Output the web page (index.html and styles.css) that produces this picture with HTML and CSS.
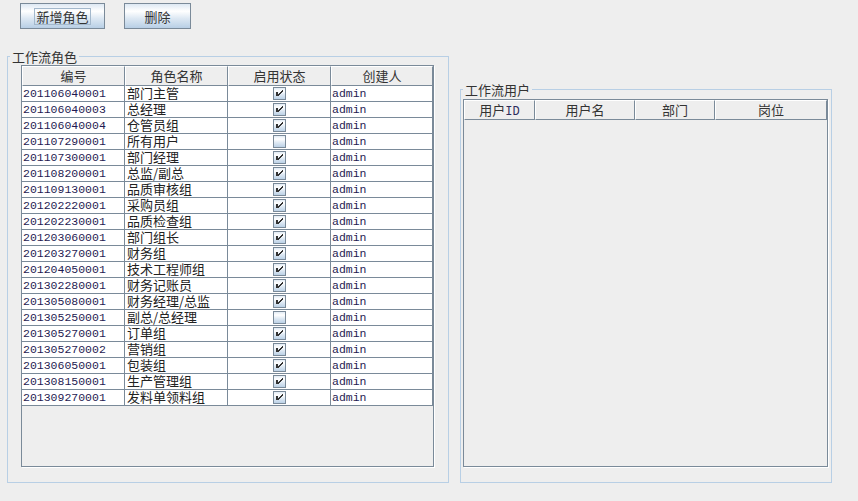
FILE: index.html
```html
<!DOCTYPE html>
<html lang="zh-CN">
<head>
<meta charset="utf-8">
<title>工作流角色</title>
<link rel="stylesheet" href="styles.css">
</head>
<body>
<svg class="defs" width="0" height="0" aria-hidden="true">
  <defs>
    <linearGradient id="cbg" x1="0" y1="0" x2="0" y2="1">
      <stop offset="0" stop-color="#dde8f3"/>
      <stop offset="0.3" stop-color="#ffffff"/>
      <stop offset="0.6" stop-color="#dde8f3"/>
      <stop offset="1" stop-color="#b8cfe5"/>
    </linearGradient>
    <symbol id="cb-off" viewBox="0 0 13 13">
      <rect x="0.5" y="0.5" width="12" height="12" fill="url(#cbg)" stroke="#7a8a99"/>
    </symbol>
    <symbol id="cb-on" viewBox="0 0 13 13">
      <rect x="0.5" y="0.5" width="12" height="12" fill="url(#cbg)" stroke="#7a8a99"/>
      <path d="M3 5h2v4h-2z M9 3h1v2h-1z M8 4h1v2h-1z M7 5h1v2h-1z M6 6h1v2h-1z M5 7h1v2h-1z" fill="#333333" shape-rendering="crispEdges"/>
    </symbol>
  </defs>
</svg>

<div class="toolbar">
  <button class="btn btn-add"><span class="focus">新增角色</span></button>
  <button class="btn btn-del">删除</button>
</div>

<div class="panels">
  <fieldset class="group group-roles">
    <legend>工作流角色</legend>
    <div class="group-body roles-body">
      <div class="scroll roles-scroll">
        <div class="grid roles-grid">
          <div class="th">编号</div>
          <div class="th">角色名称</div>
          <div class="th">启用状态</div>
          <div class="th">创建人</div>

          <div class="td mono">201106040001</div><div class="td">部门主管</div><div class="td cb-cell"><svg class="cb"><use href="#cb-on"/></svg></div><div class="td mono">admin</div>
          <div class="td mono">201106040003</div><div class="td">总经理</div><div class="td cb-cell"><svg class="cb"><use href="#cb-on"/></svg></div><div class="td mono">admin</div>
          <div class="td mono">201106040004</div><div class="td">仓管员组</div><div class="td cb-cell"><svg class="cb"><use href="#cb-on"/></svg></div><div class="td mono">admin</div>
          <div class="td mono">201107290001</div><div class="td">所有用户</div><div class="td cb-cell"><svg class="cb"><use href="#cb-off"/></svg></div><div class="td mono">admin</div>
          <div class="td mono">201107300001</div><div class="td">部门经理</div><div class="td cb-cell"><svg class="cb"><use href="#cb-on"/></svg></div><div class="td mono">admin</div>
          <div class="td mono">201108200001</div><div class="td">总监/副总</div><div class="td cb-cell"><svg class="cb"><use href="#cb-on"/></svg></div><div class="td mono">admin</div>
          <div class="td mono">201109130001</div><div class="td">品质审核组</div><div class="td cb-cell"><svg class="cb"><use href="#cb-on"/></svg></div><div class="td mono">admin</div>
          <div class="td mono">201202220001</div><div class="td">采购员组</div><div class="td cb-cell"><svg class="cb"><use href="#cb-on"/></svg></div><div class="td mono">admin</div>
          <div class="td mono">201202230001</div><div class="td">品质检查组</div><div class="td cb-cell"><svg class="cb"><use href="#cb-on"/></svg></div><div class="td mono">admin</div>
          <div class="td mono">201203060001</div><div class="td">部门组长</div><div class="td cb-cell"><svg class="cb"><use href="#cb-on"/></svg></div><div class="td mono">admin</div>
          <div class="td mono">201203270001</div><div class="td">财务组</div><div class="td cb-cell"><svg class="cb"><use href="#cb-on"/></svg></div><div class="td mono">admin</div>
          <div class="td mono">201204050001</div><div class="td">技术工程师组</div><div class="td cb-cell"><svg class="cb"><use href="#cb-on"/></svg></div><div class="td mono">admin</div>
          <div class="td mono">201302280001</div><div class="td">财务记账员</div><div class="td cb-cell"><svg class="cb"><use href="#cb-on"/></svg></div><div class="td mono">admin</div>
          <div class="td mono">201305080001</div><div class="td">财务经理/总监</div><div class="td cb-cell"><svg class="cb"><use href="#cb-on"/></svg></div><div class="td mono">admin</div>
          <div class="td mono">201305250001</div><div class="td">副总/总经理</div><div class="td cb-cell"><svg class="cb"><use href="#cb-off"/></svg></div><div class="td mono">admin</div>
          <div class="td mono">201305270001</div><div class="td">订单组</div><div class="td cb-cell"><svg class="cb"><use href="#cb-on"/></svg></div><div class="td mono">admin</div>
          <div class="td mono">201305270002</div><div class="td">营销组</div><div class="td cb-cell"><svg class="cb"><use href="#cb-on"/></svg></div><div class="td mono">admin</div>
          <div class="td mono">201306050001</div><div class="td">包装组</div><div class="td cb-cell"><svg class="cb"><use href="#cb-on"/></svg></div><div class="td mono">admin</div>
          <div class="td mono">201308150001</div><div class="td">生产管理组</div><div class="td cb-cell"><svg class="cb"><use href="#cb-on"/></svg></div><div class="td mono">admin</div>
          <div class="td mono">201309270001</div><div class="td">发料单领料组</div><div class="td cb-cell"><svg class="cb"><use href="#cb-on"/></svg></div><div class="td mono">admin</div>
        </div>
      </div>
    </div>
  </fieldset>

  <fieldset class="group group-users">
    <legend>工作流用户</legend>
    <div class="group-body users-body">
      <div class="scroll users-scroll">
        <div class="grid users-grid">
          <div class="th">用户<span class="mono-h">ID</span></div>
          <div class="th">用户名</div>
          <div class="th">部门</div>
          <div class="th">岗位</div>
        </div>
      </div>
    </div>
  </fieldset>
</div>
</body>
</html>
```

FILE: styles.css
```css
* {
  box-sizing: border-box;
}

html, body {
  margin: 0;
  background: #eeeeee;
}

body {
  width: 858px;
  height: 501px;
  overflow: hidden;
  font-family: "Noto Sans CJK SC", "Noto Sans", sans-serif;
  font-size: 13px;
  color: #333333;
}

.defs {
  display: block;
  width: 0;
  height: 0;
}

/* toolbar */
.toolbar {
  display: flex;
  gap: 19px;
  padding: 3px 0 0 20px;
}

.btn {
  height: 26px;
  padding: 0;
  margin: 0;
  border: 1px solid #7a8a99;
  background: linear-gradient(#dde8f3 0%, #ffffff 30%, #dde8f3 60%, #b8cfe5 100%);
  font-family: "Noto Sans CJK SC", sans-serif;
  font-size: 13px;
  line-height: 15px;
  color: #333333;
  display: flex;
  align-items: center;
  justify-content: center;
}

.btn-add {
  width: 85px;
}

.btn-del {
  width: 67px;
}

.focus {
  display: block;
  border: 1px solid #a3b8cc;
  padding: 0 1px;
  height: 17px;
  line-height: 15px;
}

/* panels */
.panels {
  display: flex;
  align-items: flex-start;
  gap: 11px;
  padding-left: 7px;
  margin-top: 20px;
}

.group {
  margin: 0;
  padding: 0;
  min-width: 0;
  border: 1px solid #b8cfe5;
}

.group legend {
  margin-left: 2px;
  padding: 0 2px;
  font-size: 13px;
  line-height: 15px;
  color: #333333;
}

.group-roles {
  width: 442px;
}

.group-users {
  width: 372px;
  margin-top: 33px;
}

.roles-body {
  padding: 1px 0 15px 13px;
}

.users-body {
  padding: 2px 0 15px 2px;
}

.scroll {
  border: 1px solid #7a8a99;
  box-shadow: 1px 1px 0 #ffffff;
  background: #eeeeee;
  overflow: hidden;
}

.roles-scroll {
  width: 413px;
  height: 402px;
}

.users-scroll {
  width: 365px;
  height: 368px;
}

.grid {
  display: grid;
}

.roles-grid {
  grid-template-columns: 103px 103px 103px 102px;
}

.users-grid {
  grid-template-columns: 71px 100px 80px 112px;
}

.th {
  height: 20px;
  border-top: 1px solid #ffffff;
  border-left: 1px solid #ffffff;
  border-right: 1px solid #7a8a99;
  border-bottom: 1px solid #7a8a99;
  background: #eeeeee;
  text-align: center;
  font-size: 13px;
  line-height: 17px;
  white-space: nowrap;
}

.td {
  height: 16px;
  background: #ffffff;
  border-right: 1px solid #7a8a99;
  border-bottom: 1px solid #7a8a99;
  padding-left: 2px;
  font-size: 13px;
  line-height: 14px;
  white-space: nowrap;
  color: #222222;
}

.td.mono {
  font-family: "Liberation Mono", "DejaVu Sans Mono", monospace;
  font-size: 11.5px;
  line-height: 15px;
  color: #1f1b52;
  padding-left: 1px;
}

.mono-h {
  font-family: "Liberation Mono", monospace;
  font-size: 12px;
  color: #2d2b5a;
}

.cb-cell {
  display: flex;
  align-items: center;
  justify-content: center;
  padding: 0;
}

.cb {
  display: block;
  width: 13px;
  height: 13px;
}
```
